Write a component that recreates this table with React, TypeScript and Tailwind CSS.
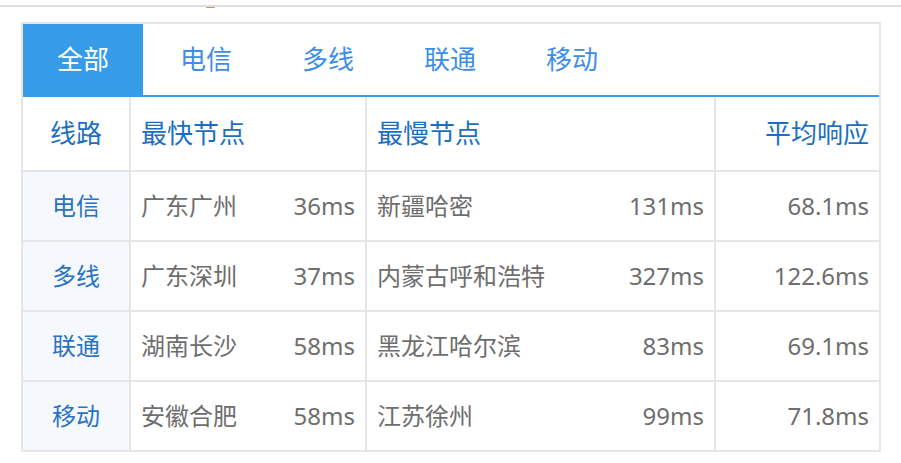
const tabs = ["全部", "电信", "多线", "联通", "移动"];

const rows = [
  { line: "电信", fast: "广东广州", fastMs: "36ms", slow: "新疆哈密", slowMs: "131ms", avg: "68.1ms" },
  { line: "多线", fast: "广东深圳", fastMs: "37ms", slow: "内蒙古呼和浩特", slowMs: "327ms", avg: "122.6ms" },
  { line: "联通", fast: "湖南长沙", fastMs: "58ms", slow: "黑龙江哈尔滨", slowMs: "83ms", avg: "69.1ms" },
  { line: "移动", fast: "安徽合肥", fastMs: "58ms", slow: "江苏徐州", slowMs: "99ms", avg: "71.8ms" },
];

const font = { fontFamily: '"Noto Sans", "Noto Sans CJK SC", sans-serif' };

export default function App() {
  return (
    <div className="w-[901px] h-[463px] bg-white text-[24px]" style={font}>
      <div className="h-[5px]" />
      <div className="h-[2px] bg-[#dedee3]" />
      <div className="h-[15px] pl-[206px]">
        <div className="w-[9px] h-[1px] bg-[#c8955a] rounded-b" />
      </div>

      <div className="ml-[21px] w-[860px] border-2 border-[#e6e6e6]">
        {/* tabs */}
        <div className="flex h-[73px] border-b-2 border-[#3a9de6] text-[26px]">
          {tabs.map((t, i) => (
            <div
              key={t}
              className={
                i === 0
                  ? "w-[120px] mr-[2px] flex items-center justify-center bg-[#369ce8] text-white"
                  : "w-[122px] flex items-center justify-center text-[#3f8ee5]"
              }
            >
              {t}
            </div>
          ))}
        </div>

        {/* table */}
        <div className="grid grid-cols-[106px_236px_349px_165px]">
          <div className="h-[73px] flex items-center justify-center text-[26px] text-[#1c6fc0]">线路</div>
          <div className="h-[73px] flex items-center pl-[10px] border-l-2 border-[#e6e6e6] text-[26px] text-[#1c6fc0]">最快节点</div>
          <div className="h-[73px] flex items-center pl-[10px] border-l-2 border-[#e6e6e6] text-[26px] text-[#1c6fc0]">最慢节点</div>
          <div className="h-[73px] flex items-center justify-end pr-[10px] border-l-2 border-[#e6e6e6] text-[26px] text-[#1c6fc0]">平均响应</div>

          {rows.map((r) => (
            <div key={r.line} className="contents">
              <div className="h-[70px] border-t-2 border-[#e6e6e6] bg-[#f5f9fd] flex items-center justify-center text-[#2a72c2]">
                {r.line}
              </div>
              <div className="h-[70px] border-t-2 border-l-2 border-[#e6e6e6] flex items-center justify-between px-[10px] text-[#6e6e6e]">
                <span>{r.fast}</span>
                <span>{r.fastMs}</span>
              </div>
              <div className="h-[70px] border-t-2 border-l-2 border-[#e6e6e6] flex items-center justify-between px-[10px] text-[#6e6e6e]">
                <span>{r.slow}</span>
                <span>{r.slowMs}</span>
              </div>
              <div className="h-[70px] border-t-2 border-l-2 border-[#e6e6e6] flex items-center justify-end pr-[10px] text-[#6e6e6e]">
                {r.avg}
              </div>
            </div>
          ))}
        </div>
      </div>
    </div>
  );
}
